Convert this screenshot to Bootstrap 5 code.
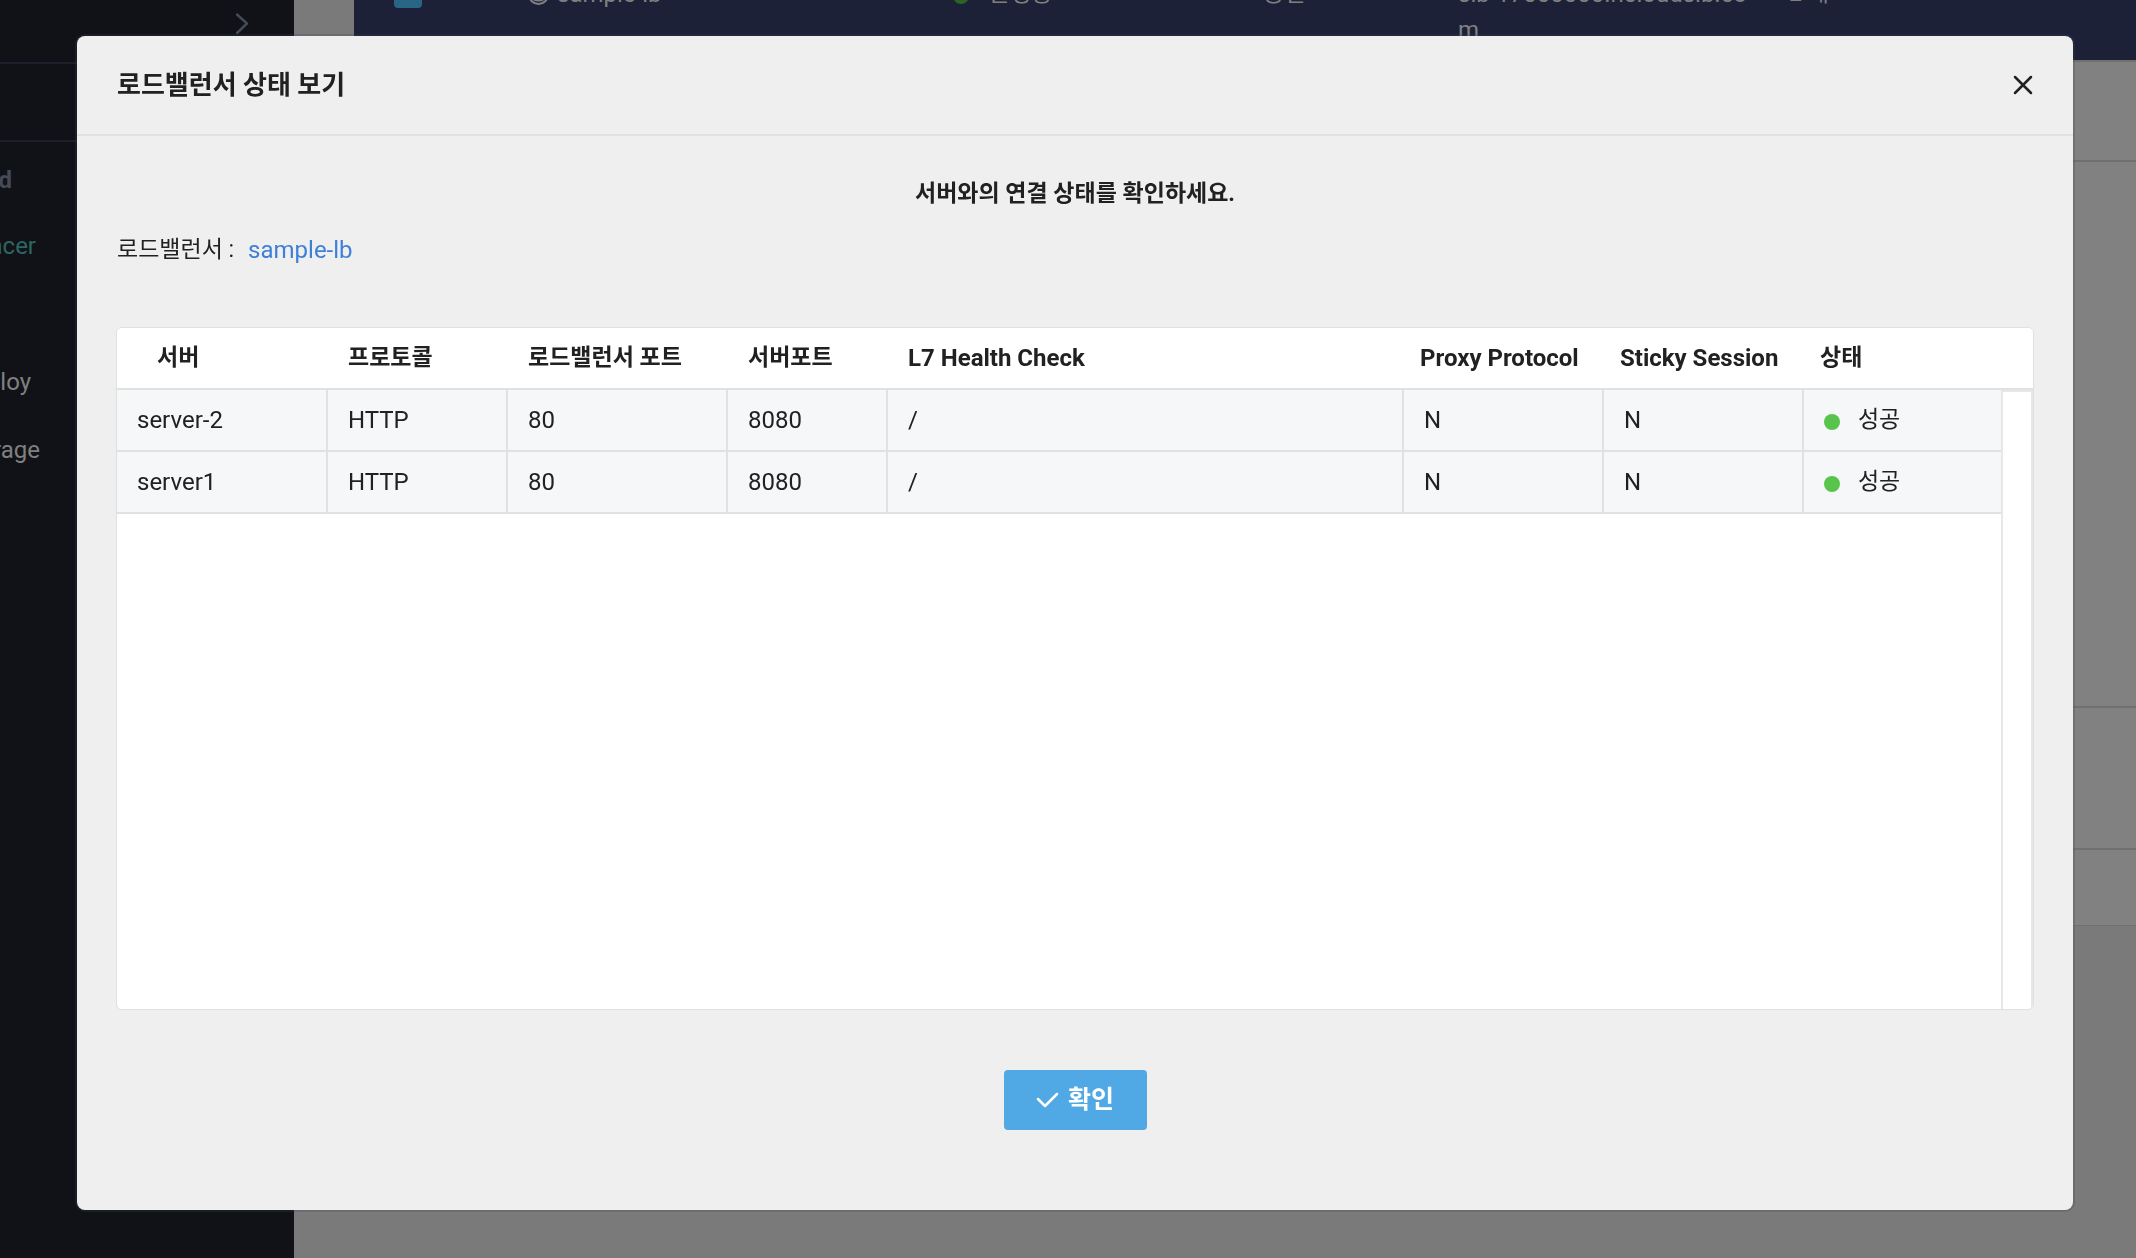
<!DOCTYPE html>
<html lang="ko">
<head>
<meta charset="utf-8">
<meta name="viewport" content="width=device-width, initial-scale=1">
<title>로드밸런서 상태 보기</title>
<link href="https://cdn.jsdelivr.net/npm/bootstrap@5.3.0/dist/css/bootstrap.min.css" rel="stylesheet">
<style>
html, body { height: 100%; }
body { font-family: Roboto, "Noto Sans CJK KR", sans-serif; font-size: 24px; line-height: 32px; color: #212121; background: #7a7a7a; overflow: hidden; }
.ko { font-size: 23px; }

/* page behind the dialog */
.side { width: 294px; background: #111217; color: #808080; }
.side .crumb { height: 64px; padding-right: 46px; border-bottom: 2px solid #1b202b; }
.side .slot { height: 78px; border-bottom: 2px solid #1b202b; }
.side nav { padding-top: 21px; }
.side nav a { display: block; height: 68px; line-height: 34px; color: inherit; text-decoration: none; white-space: nowrap; direction: rtl; }
.side nav a bdi { direction: ltr; }
.side nav a.wide-1 { width: 12px; } .side nav a.wide-2 { width: 36px; }
.side nav a.wide-3 { width: 31px; } .side nav a.wide-4 { width: 40px; }
.side nav a.group { height: 66px; color: #434a58; font-weight: 700; }
.side nav a.current { color: #2c6663; }
.side .blank { height: 68px; }
.behind { margin-left: 60px; }
.picked { height: 60px; background: #1c2138; color: #808080; overflow: hidden; }
.picked .cells { height: 84px; line-height: 36px; }
.picked .c1 { width: 174px; padding-left: 40px; } .picked .c2 { width: 425px; }
.picked .c3 { width: 310px; } .picked .c4 { width: 195px; } .picked .c5 { width: 331px; }
.tick { width: 28px; height: 28px; background: #296584; border-radius: 4px; }
.dot { width: 16px; height: 16px; margin-right: 18px; border-radius: 50%; background: #58c44c; }
.picked .dot { margin-right: 20px; background: #2c6426; }
.pane { background: #818181; border-top: 2px solid #707070; }
.p1 { height: 100px; } .p2 { height: 546px; } .p3 { height: 142px; } .p4 { height: 78px; border-bottom: 1px solid #707070; }

/* dialog */
.modal { padding: 36px 63px 48px 77px; }
.modal-dialog { max-width: none; margin: 0; height: 100%; }
.modal-content { height: 100%; border: 0; border-radius: 8px; background: #efefef; color: #212121; box-shadow: 0 0 0 2px rgba(60,70,80,.25); }
.modal-header { height: 100px; padding: 0 40px; border-bottom: 2px solid #e1e1e1; }
.modal-title { font-size: 26px; line-height: 36px; font-weight: 700; }
.modal-body { padding: 42px 39px 80px; }
.close-x { width: 20px; height: 20px; line-height: 0; color: #212121; }
.lead-line { font-weight: 700; margin-bottom: 24px; }
.name-line { gap: 14px; padding-left: 1px; margin-bottom: 61px; }
.name-line a { color: #3e80d8; text-decoration: none; }
.grid { border: 1px solid #e0e0e0; border-radius: 6px; background: #fff; overflow: hidden; }
.grid table { table-layout: fixed; border-collapse: separate; border-spacing: 0; margin: 0; color: #212121; }
.grid th, .grid td { height: 62px; padding: 0 20px; border: 0; border-bottom: 2px solid #e1e1e1; vertical-align: middle; white-space: nowrap; }
.grid th { background: #fff; font-weight: 700; }
.grid th:first-child { padding-left: 40px; }
.grid th.tight { padding: 0 0 0 16px; }
.grid td { background: #f5f7f9; border-right: 2px solid #e1e1e1; }
.grid td:last-child { border-right: 0; }
.w-server { width: 211px; } .w-proto { width: 180px; } .w-lbport { width: 220px; } .w-port { width: 160px; }
.w-flag { width: 200px; } .w-state { width: 197px; } .w-rail { width: 32px; }
.rail { width: 32px; border: solid #e7e7e7; border-width: 2px 2px 0; }
.actions { padding-top: 60px; }
.confirm { width: 143px; height: 60px; padding: 0; border: 0; border-radius: 4px; background: #50a9e4; color: #fff; font-size: 25px; font-weight: 700; }
.confirm:hover { background: #50a9e4; color: #fff; }
</style>
<script src="https://cdn.jsdelivr.net/npm/bootstrap@5.3.0/dist/js/bootstrap.bundle.min.js"></script>
</head>
<body>
<div class="d-flex h-100" aria-hidden="true">
  <aside class="side flex-shrink-0 h-100 overflow-hidden">
    <div class="crumb d-flex justify-content-end">
      <svg class="mt-2" width="12" height="30" viewBox="0 0 12 30" fill="none" stroke="#434a58" stroke-width="2.5" stroke-linecap="round"><path d="M1 6.500L11 15.500L1 25"/></svg>
    </div>
    <div class="slot"></div>
    <nav>
      <a href="#" class="group wide-1 overflow-hidden"><bdi>Cloud</bdi></a>
      <a href="#" class="current wide-2 overflow-hidden"><bdi>Load Balancer</bdi></a>
      <div class="blank"></div>
      <a href="#" class="wide-3 overflow-hidden"><bdi>Deploy</bdi></a>
      <a href="#" class="wide-4 overflow-hidden"><bdi>Storage</bdi></a>
    </nav>
  </aside>
  <main class="behind flex-grow-1 overflow-hidden">
    <div class="picked d-flex flex-column justify-content-end">
      <div class="cells d-flex flex-shrink-0 align-items-start w-100">
        <div class="c1 flex-shrink-0"><div class="tick mt-1 d-flex align-items-center justify-content-center"><svg width="16" height="12" viewBox="0 0 16 12" fill="none" stroke="#808080" stroke-width="3"><path d="M1 5L6 10L15 1"/></svg></div></div>
        <div class="c2 flex-shrink-0 d-flex align-items-center gap-2"><svg width="21" height="21" viewBox="0 0 21 21" fill="none" stroke="#808080" stroke-width="2"><circle cx="10.500" cy="10.500" r="9.500"/><path d="M5 15Q10.500 18 16 15"/></svg>sample-lb</div>
        <div class="c3 flex-shrink-0 d-flex align-items-center ko"><span class="dot mt-1"></span>운영중</div>
        <div class="c4 flex-shrink-0 ko">공인</div>
        <div class="c5 flex-shrink-0">slb-17000000.ncloudslb.co<br>m</div>
        <div class="flex-shrink-0 ko">2 개</div>
      </div>
    </div>
    <div class="pane p1"></div>
    <div class="pane p2"></div>
    <div class="pane p3"></div>
    <div class="pane p4"></div>
  </main>
</div>

<div class="modal d-block overflow-hidden" role="dialog" aria-modal="true" aria-labelledby="dialogTitle">
  <div class="modal-dialog">
    <div class="modal-content">
      <div class="modal-header">
        <h1 class="modal-title" id="dialogTitle">로드밸런서 상태 보기</h1>
        <button type="button" class="close-x btn border-0 p-0" aria-label="닫기"><svg width="20" height="20" viewBox="0 0 20 20" fill="none" stroke="currentColor" stroke-width="2.500" stroke-linecap="round"><path d="M2 2L18 18M18 2L2 18"/></svg></button>
      </div>
      <div class="modal-body d-flex flex-column">
        <p class="lead-line ko text-center">서버와의 연결 상태를 확인하세요.</p>
        <p class="name-line d-flex"><span class="ko">로드밸런서 :</span><a href="#">sample-lb</a></p>
        <div class="grid d-flex flex-column flex-grow-1">
          <table class="table">
            <colgroup><col class="w-server"><col class="w-proto"><col class="w-lbport"><col class="w-port"><col><col class="w-flag"><col class="w-flag"><col class="w-state"><col class="w-rail"></colgroup>
            <thead><tr>
              <th scope="col" class="ko">서버</th><th scope="col" class="ko">프로토콜</th><th scope="col" class="ko">로드밸런서 포트</th><th scope="col" class="ko">서버포트</th><th scope="col">L7 Health Check</th><th scope="col" class="tight">Proxy Protocol</th><th scope="col" class="tight">Sticky Session</th><th scope="col" class="tight ko" colspan="2">상태</th>
            </tr></thead>
          </table>
          <div class="d-flex flex-grow-1">
            <div class="flex-grow-1">
              <table class="table">
                <colgroup><col class="w-server"><col class="w-proto"><col class="w-lbport"><col class="w-port"><col><col class="w-flag"><col class="w-flag"><col class="w-state"></colgroup>
                <tbody>
                  <tr><td>server-2</td><td>HTTP</td><td>80</td><td>8080</td><td>/</td><td>N</td><td>N</td><td><span class="d-flex align-items-center ko"><span class="dot mt-1"></span>성공</span></td></tr>
                  <tr><td>server1</td><td>HTTP</td><td>80</td><td>8080</td><td>/</td><td>N</td><td>N</td><td><span class="d-flex align-items-center ko"><span class="dot mt-1"></span>성공</span></td></tr>
                </tbody>
              </table>
            </div>
            <div class="rail flex-shrink-0"></div>
          </div>
        </div>
        <div class="actions d-flex justify-content-center">
          <button type="button" class="confirm btn d-flex align-items-center justify-content-center gap-2"><svg width="24" height="16" viewBox="0 0 24 16" fill="none" stroke="currentColor" stroke-width="2.500" stroke-linecap="round" stroke-linejoin="round"><path d="M2 7L9 14L21 2"/></svg>확인</button>
        </div>
      </div>
    </div>
  </div>
</div>
</body>
</html>
